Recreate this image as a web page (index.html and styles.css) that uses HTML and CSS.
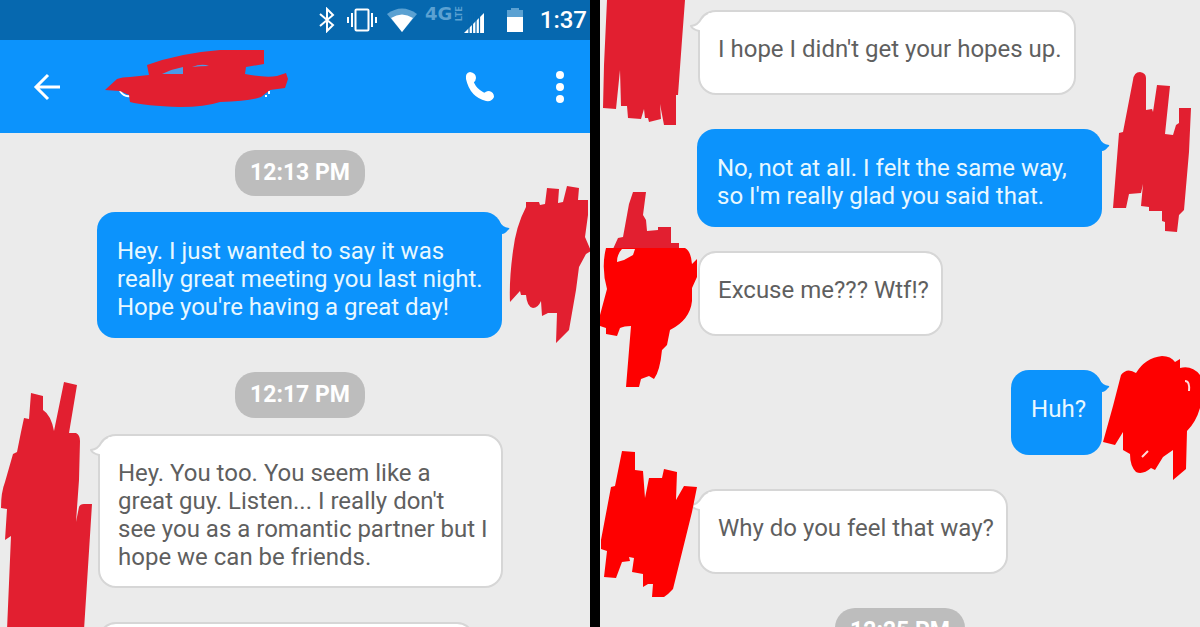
FILE: index.html
```html
<!DOCTYPE html>
<html lang="en">
<head>
    <meta charset="UTF-8">
    <meta name="viewport" content="width=device-width, initial-scale=1.0">
    <title>Messages</title>
    <link rel="stylesheet" href="styles.css">
</head>
<body>
    <div class="phone phone-left">
        <div class="status-bar">
            <svg class="status-bt" width="16" height="26" viewBox="0 0 16 26">
                <path d="M1 7 L14 18 L8 24 V2 L14 8 L1 19" fill="none" stroke="#fff" stroke-width="2"/>
            </svg>
            <svg class="status-vibrate" width="30" height="24" viewBox="0 0 30 24">
                <rect x="8.500" y="1.500" width="13" height="21" rx="1" fill="none" stroke="#fff" stroke-width="2"/>
                <path d="M5 5V19M1 9V15M25 5V19M29 9V15" stroke="#fff" stroke-width="2"/>
            </svg>
            <svg class="status-wifi" width="30" height="24" viewBox="0 0 30 24">
                <path d="M0 6 Q15 -5 30 6 L15 24Z" fill="#5ba1d2"/>
                <path d="M4 10 Q15 3 26 10 L15 24Z" fill="#fff"/>
            </svg>
            <svg class="status-lte" width="38" height="40" viewBox="0 0 38 40">
                <text x="0" y="20" class="lte-big">4G</text>
                <text transform="translate(37 21) rotate(-90)" class="lte-small">LTE</text>
            </svg>
            <svg class="status-signal" width="21" height="22" viewBox="0 0 21 22">
                <path d="M0 22 L20 2 V22Z" fill="#fff"/>
                <path d="M5 0V22M8.500 0V22M12 0V22M15.500 0V22" stroke="#0668af" stroke-width="1.200"/>
            </svg>
            <svg class="status-battery" width="16" height="24" viewBox="0 0 16 24">
                <path d="M0 2H4V0H12V2H16V9H0Z" fill="#5ba1d2"/>
                <path d="M0 9H16V24H0Z" fill="#fff"/>
            </svg>
            <span class="clock">1:37</span>
        </div>

        <div class="toolbar">
            <button class="icon-button" aria-label="Back">
                <svg width="28" height="28" viewBox="0 0 28 28">
                    <path d="M15 2 L3 14 L15 26 M3 14 H27" fill="none" stroke="#fff" stroke-width="3"/>
                </svg>
            </button>
            <svg class="name-scribble" width="184" height="60" viewBox="104 49 184 60">
                <path d="M120 91Q124 97 130 96M265 96H267M269 94V91" fill="none" stroke="#fff" stroke-width="2"/>
                <path fill="#e21f30" d="M105 90 L117 79 Q122 77 130 77 L149 75 L147 65 Q180 53 220 50 L264 50 V64 L246 67 L245 74 Q265 78 277 76 L286 73 L288 79 L285 88 L270 90 L261 97 Q250 101 220 102 Q205 107 180 107 Q145 106 130 102 L129 95 L120 91Z"/>
                <path fill="#4a9be8" d="M162 74 Q172 69 183 67 V74Z M192 67 Q202 63 209 66 Q200 66 192 67Z"/>
            </svg>
            <button class="icon-button call" aria-label="Call">
                <svg width="30" height="30" viewBox="0 0 30 30">
                    <path d="M5 5 Q7 21 25 25" fill="none" stroke="#fff" stroke-width="5"/>
                    <path d="M1 7 Q0 1 5 0 Q11 1 11 6 Q11 9 8 11 L8 16 Q12 21 18 23 Q20 19 24 19 Q29 20 29 25 Q27 30 21 29 Q5 25 1 7Z" fill="#fff"/>
                </svg>
            </button>
            <button class="icon-button more" aria-label="More options">
                <svg width="8" height="32" viewBox="0 0 8 32">
                    <circle cx="4" cy="4" r="4" fill="#fff"/>
                    <circle cx="4" cy="16" r="4" fill="#fff"/>
                    <circle cx="4" cy="28" r="4" fill="#fff"/>
                </svg>
            </button>
        </div>

        <div class="chat">
            <div class="time">12:13 PM</div>
            <div class="row sent">
                <p class="bubble">Hey. I just wanted to say it was really great meeting you last night. Hope you're having a great day!
                    <svg class="tail" width="16" height="16" viewBox="0 0 16 16"><path d="M0 0H4Q8 7 15 8Q16 9 14 10Q11 14 8 14H0Z"/></svg>
                </p>
                <svg class="scribble scribble-a" width="83" height="160" viewBox="508 184 83 160">
                    <path d="M526 202H539L540 205L545 204L547 188L559 189L558 203L563 202L567 186L579 188L578 200H588L588 215L585 237L591 251L586 254L579 267L576 290L569 330L556 343L557 313H548L542 316L541 301Q538 308 533 308Q527 307 526 295H521L520 291L510 302Q509 280 513 251Q516 226 526 207Z"/>
                </svg>
            </div>

            <div class="time">12:17 PM</div>
            <div class="row received">
                <p class="bubble">Hey. You too. You seem like a great guy. Listen... I really don't<br>see you as a romantic partner but I hope we can be friends.
                    <svg class="tail" width="20" height="24" viewBox="0 0 20 24"><path d="M20 1Q14 2 11 7Q8 13 1 14Q2 17 9 19V24H20Z"/><path class="tail-line" d="M18 1Q13 3 11 7Q8 13 1 14Q2 17 9 19V24"/></svg>
                </p>
                <svg class="scribble scribble-b" width="94" height="250" viewBox="0 380 94 250">
                    <path d="M31 393L43 396V410Q51 415 54 431L64 382L77 385L69 433H76Q80 435 80 441L79 480L76 522L79 507Q80 504 84 504H92L84 630H7L11 536L5 540L7 509L1 508Q1 492 5 482L13 454L17 452L21 432L24 418L29 419Z"/>
                </svg>
            </div>
            <div class="row received">
                <p class="bubble bubble-next"></p>
            </div>
        </div>
    </div>

    <div class="phone">
        <div class="chat chat-continued">
            <div class="row received">
                <p class="bubble">I hope I didn't get your hopes up.
                    <svg class="tail" width="20" height="24" viewBox="0 0 20 24"><path d="M20 1Q14 2 11 7Q8 13 1 14Q2 17 9 19V24H20Z"/><path class="tail-line" d="M18 1Q13 3 11 7Q8 13 1 14Q2 17 9 19V24"/></svg>
                </p>
                <svg class="scribble scribble-c" width="88" height="126" viewBox="600 0 88 126">
                    <path d="M607 0H685L682 40L678 95H676V125H664L660 104L661 119L649 122L648 118H645L644 109L641 119L628 118L627 106H621L620 70L616 109L603 108L604 65Z"/>
                </svg>
            </div>
            <div class="row sent">
                <p class="bubble">No, not at all. I felt the same way, so I'm really glad you said that.
                    <svg class="tail" width="16" height="16" viewBox="0 0 16 16"><path d="M0 0H4Q8 7 15 8Q16 9 14 10Q11 14 8 14H0Z"/></svg>
                </p>
                <svg class="scribble scribble-d" width="84" height="162" viewBox="1112 68 84 162">
                    <path d="M1133 78Q1134 70 1140 70Q1146 71 1146 76V108L1152 107L1153 110L1157 83L1170 84L1165 132L1173 133L1176 123L1179 121L1179 106H1191L1189 150L1184 208L1179 213L1177 230L1165 229V220L1162 219V209H1149V205L1141 204L1143 182L1141 191L1129 192L1126 206H1113L1119 131L1123 130Z"/>
                </svg>
            </div>
            <div class="row received seam">
                <p class="bubble">Excuse me??? Wtf!?</p>
                <svg class="scribble scribble-e" width="100" height="198" viewBox="600 190 100 198">
                    <path d="M613 248L618 237L623 236L629 203L633 191H646L643 214L646 219L647 230L658 229V226H671V242H679V248Z"/>
                    <path class="bright" fill-rule="evenodd" d="M606 247H685Q691 250 692 263L697 258V276L692 287V300Q690 319 670 329L667 344L662 349Q660 370 654 378L649 375L641 378L639 386H626L631 325Q624 325 620 327L617 335L606 333V327L600 325V314L607 288Q601 267 606 247ZM622 248Q617 253 617 261L624 259L633 254L635 248Z"/>
                </svg>
            </div>
            <div class="row sent">
                <p class="bubble">Huh?
                    <svg class="tail" width="16" height="16" viewBox="0 0 16 16"><path d="M0 0H4Q8 7 15 8Q16 9 14 10Q11 14 8 14H0Z"/></svg>
                </p>
                <svg class="scribble scribble-f" width="98" height="128" viewBox="1102 354 98 128">
                    <path class="bright" d="M1121 374Q1127 366 1136 372Q1145 357 1162 355Q1171 355 1175 361L1180 358V367Q1192 364 1200 374V407Q1196 421 1187 430L1186 468L1173 479V449L1163 456L1155 469L1151 467Q1143 474 1136 471Q1130 465 1130 453L1123 449V431L1115 444L1103 441L1113 405Z"/>
                    <path d="M1185 380Q1190 380 1189 390M1142 456L1148 450" class="scratch"/>
                </svg>
            </div>
            <div class="row received">
                <p class="bubble">Why do you feel that way?
                    <svg class="tail" width="20" height="24" viewBox="0 0 20 24"><path d="M20 1Q14 2 11 7Q8 13 1 14Q2 17 9 19V24H20Z"/><path class="tail-line" d="M18 1Q13 3 11 7Q8 13 1 14Q2 17 9 19V24"/></svg>
                </p>
                <svg class="scribble scribble-g" width="98" height="148" viewBox="600 450 98 148">
                    <path class="bright" d="M622 451L635 452V470L643 471L645 498L649 478H662L664 469L677 472L676 500L684 486L697 487L692 512L673 589L668 594L664 597H652L653 584H648L643 587V574L632 572L634 558L629 557L630 561L622 562L616 578L604 577L607 551L601 549L601 540L611 487L615 486Z"/>
                </svg>
            </div>
            <div class="time">12:25 PM</div>
        </div>
    </div>
</body>
</html>
```

FILE: styles.css
```css
body {
    margin: 0;
    display: flex;
    height: 100vh;
    overflow: hidden;
    font-family: Roboto, sans-serif;
    background-color: #ebebeb;
}

.phone {
    position: relative;
    flex: 1;
    min-width: 0;
    overflow: hidden;
}

/* black strip between the two screens */
.phone-left::after {
    content: "";
    position: absolute;
    top: 0;
    right: 0;
    bottom: 0;
    width: 10px;
    background-color: #000;
}

.status-bar {
    display: flex;
    align-items: center;
    justify-content: flex-end;
    height: 40px;
    padding-right: 13px;
    background-color: #0668af;
}

.status-vibrate {
    margin-left: 12px;
}
.status-wifi {
    margin-left: 10px;
}
.status-lte {
    margin-left: 8px;
}
.status-signal {
    margin-top: 4px;
    margin-left: 1px;
}
.status-battery {
    margin-left: 22px;
}

.lte-big {
    font-family: "DejaVu Sans", sans-serif;
    font-size: 18px;
    font-weight: 700;
    fill: #5ba1d2;
}
.lte-small {
    font-size: 9px;
    font-weight: 700;
    fill: #5ba1d2;
}

.clock {
    margin-left: 17px;
    font-size: 24px;
    font-weight: 500;
    color: #fff;
}

.toolbar {
    display: flex;
    align-items: center;
    height: 93px;
    padding: 0 36px 0 33px;
    background-color: #0c93fc;
}

.icon-button {
    display: flex;
    padding: 0;
    border: none;
    background: none;
}

.name-scribble {
    margin-left: 43px;
    margin-bottom: 16px;
}

.call {
    margin-left: auto;
}
.more {
    margin-left: 61px;
}

.chat {
    display: flex;
    flex-direction: column;
    padding-top: 17px;
}
.chat-continued {
    padding-top: 10px;
}

.time {
    align-self: center;
    padding: 0 15px;
    border-radius: 20px;
    font-size: 23px;
    font-weight: 700;
    line-height: 46px;
    color: #fff;
    background-color: #bdbdbd;
}

.row {
    position: relative;
    display: flex;
    padding: 0 97px 0 98px;
}
.row + .row,
.row + .time {
    margin-top: 34px;
}
.time + .row {
    margin-top: 16px;
}
.row + .seam {
    margin-top: 24px;
}

.bubble {
    position: relative;
    box-sizing: border-box;
    min-height: 85px;
    margin: 0;
    padding: 25px 16px 17px 20px;
    border-radius: 18px;
    font-size: 24px;
    line-height: 28px;
}

/* only its top edge shows at the bottom of the screen */
.bubble-next {
    width: 93%;
}

.sent {
    justify-content: flex-end;
    padding: 0 98px 0 97px;
}
.sent .bubble {
    color: #e8f8ff;
    background-color: #0c93fc;
}
.received .bubble {
    padding: 23px 12px 15px 18px;
    border: 2px solid #d6d6d6;
    color: #5f5f5f;
    background-color: #fff;
}

.tail {
    position: absolute;
}
.sent .tail {
    top: 8px;
    right: -8px;
    fill: #0c93fc;
}
.received .tail {
    top: 0;
    left: -10px;
    fill: #fff;
}
.received .tail-line {
    fill: none;
    stroke: #d6d6d6;
    stroke-width: 2;
}

/* marker strokes over the avatars */
.scribble {
    position: absolute;
    left: 0;
    fill: #e21f30;
}
.sent .scribble {
    left: auto;
    right: 0;
}
.scribble .bright {
    fill: #fe0000;
}
.scribble .scratch {
    fill: none;
    stroke: #ffd9d9;
    stroke-width: 2;
}

.scribble-a {
    top: -28px;
}
.sent .scribble-a {
    right: 9px;
}
.scribble-b {
    top: -54px;
}
.scribble-c {
    top: -10px;
}
.scribble-d {
    top: -59px;
}
.sent .scribble-d {
    right: 4px;
}
.scribble-e {
    top: -60px;
}
.scribble-f {
    top: -15px;
}
.scribble-g {
    top: -39px;
}
```
